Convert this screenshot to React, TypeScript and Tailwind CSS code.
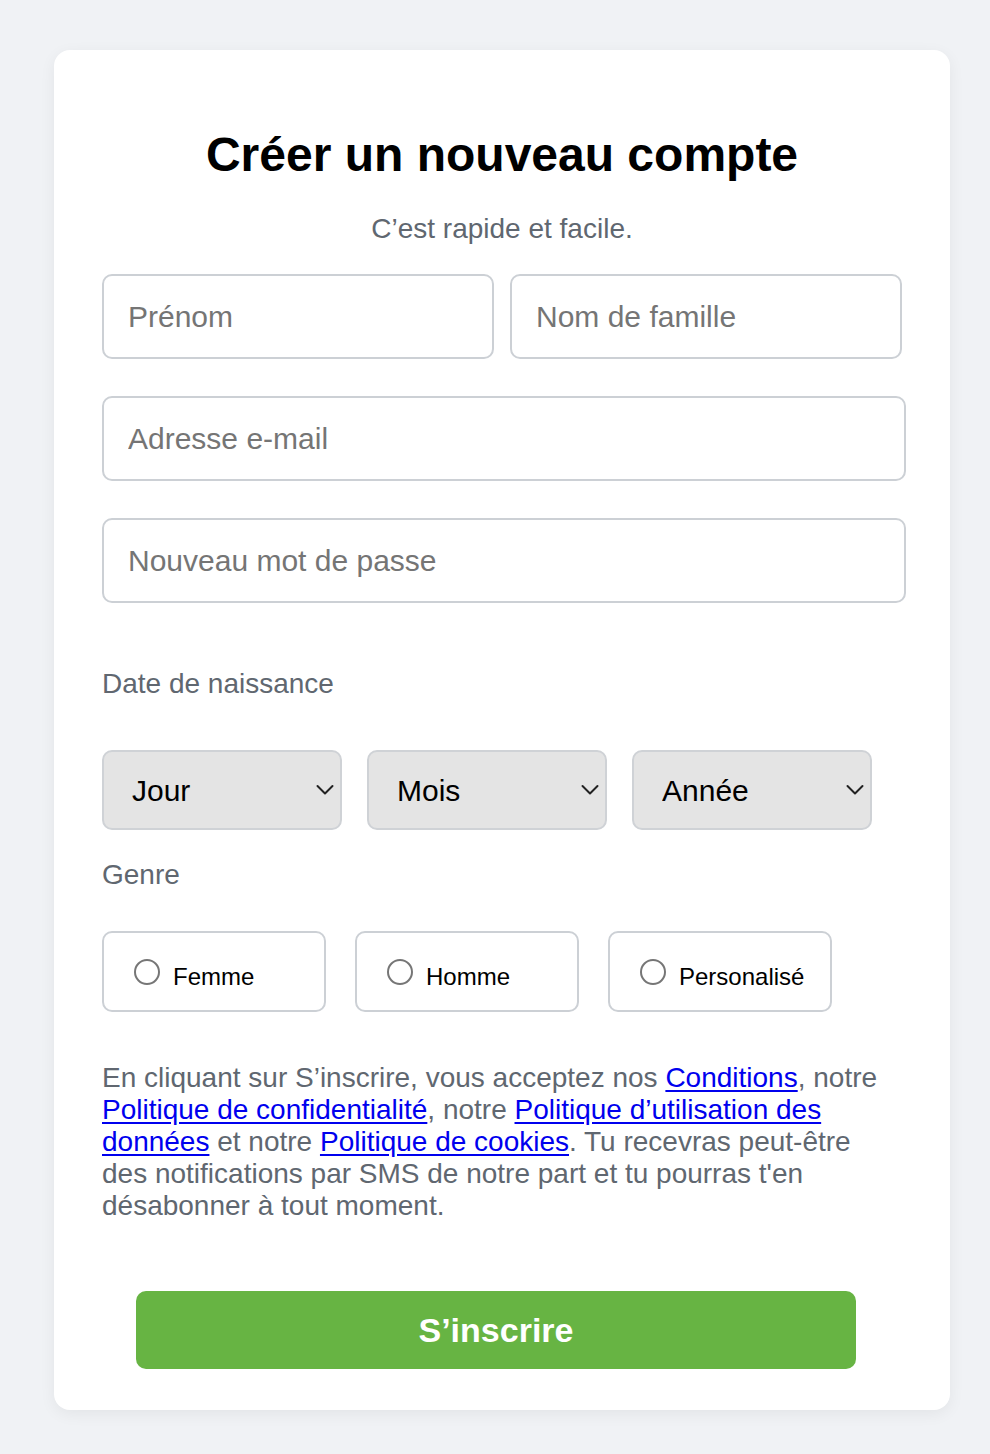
import React from "react";

const font = { fontFamily: '"Liberation Sans", Arial, Helvetica, sans-serif' };

function Chevron() {
  return (
    <svg width="18" height="12" viewBox="0 0 18 12" className="pointer-events-none absolute right-[8px] top-1/2 -translate-y-1/2">
      <path d="M1.5 2 L9 9.5 L16.5 2" fill="none" stroke="#222" strokeWidth="2" strokeLinecap="round" strokeLinejoin="round" />
    </svg>
  );
}

function Select({ label }: { label: string }) {
  return (
    <div className="relative w-[240px] h-[80px]">
      <select
        defaultValue=""
        className="appearance-none w-full h-full rounded-[10px] border-2 border-[#cfd2d6] bg-[#e4e4e4] pl-[28px] text-[30px] text-black outline-none"
        style={font}
      >
        <option value="">{label}</option>
      </select>
      <Chevron />
    </div>
  );
}

function Radio({ label }: { label: string }) {
  return (
    <label className="flex items-center w-[224px] h-[81px] rounded-[10px] border-2 border-[#ccd0d5] pl-[30px] cursor-pointer">
      <span className="w-[26px] h-[26px] rounded-full border-2 border-[#767676] bg-white shrink-0" />
      <span className="ml-[13px] text-[24px] text-black mt-[10px]">{label}</span>
    </label>
  );
}

function Input({ placeholder, className = "" }: { placeholder: string; className?: string }) {
  return (
    <input
      placeholder={placeholder}
      className={`h-[85px] rounded-[10px] border-2 border-[#ccd0d5] bg-white px-[24px] text-[30px] text-black placeholder:text-[#757575] outline-none ${className}`}
      style={font}
    />
  );
}

const Link = ({ children }: { children: React.ReactNode }) => (
  <a href="#" className="text-[#0000ee] underline underline-offset-[3px]">{children}</a>
);

export default function App() {
  return (
    <div className="min-h-[1454px] bg-[#f0f2f5] pt-[50px] pb-[44px] flex justify-start" style={font}>
      <div className="ml-[54px] w-[896px] bg-white rounded-[16px] shadow-[0_4px_16px_rgba(0,0,0,0.06)] px-[48px] pt-[77px] pb-[41px]">
        <h1 className="text-center text-[48px] leading-[56px] font-bold text-black">Créer un nouveau compte</h1>
        <p className="text-center text-[28px] leading-[32px] text-[#606770] mt-[30px]">C’est rapide et facile.</p>

        <div className="flex gap-[16px] mt-[29px]">
          <Input placeholder="Prénom" className="w-[392px]" />
          <Input placeholder="Nom de famille" className="w-[392px]" />
        </div>
        <Input placeholder="Adresse e-mail" className="block w-[804px] mt-[37px]" />
        <Input placeholder="Nouveau mot de passe" className="block w-[804px] mt-[37px]" />

        <div className="text-[28px] leading-[32px] text-[#606770] mt-[65px]">Date de naissance</div>
        <div className="flex gap-[25px] mt-[50px]">
          <Select label="Jour" />
          <Select label="Mois" />
          <Select label="Année" />
        </div>

        <div className="text-[28px] leading-[32px] text-[#606770] mt-[29px]">Genre</div>
        <div className="flex gap-[29px] mt-[40px]">
          <Radio label="Femme" />
          <Radio label="Homme" />
          <Radio label="Personalisé" />
        </div>

        <p className="text-[28px] leading-[32px] text-[#606770] mt-[50px]">
          En cliquant sur S’inscrire, vous acceptez nos <Link>Conditions</Link>, notre{" "}
          <Link>Politique de confidentialité</Link>, notre <Link>Politique d’utilisation des données</Link> et notre{" "}
          <Link>Politique de cookies</Link>. Tu recevras peut-être des notifications par SMS de notre part et tu pourras t'en désabonner à tout moment.
        </p>

        <div className="flex justify-start mt-[69px] pl-[34px]">
          <button className="w-[720px] h-[78px] rounded-[10px] bg-[#67b443] text-white text-[34px] font-bold" style={font}>
            S’inscrire
          </button>
        </div>
      </div>
    </div>
  );
}
